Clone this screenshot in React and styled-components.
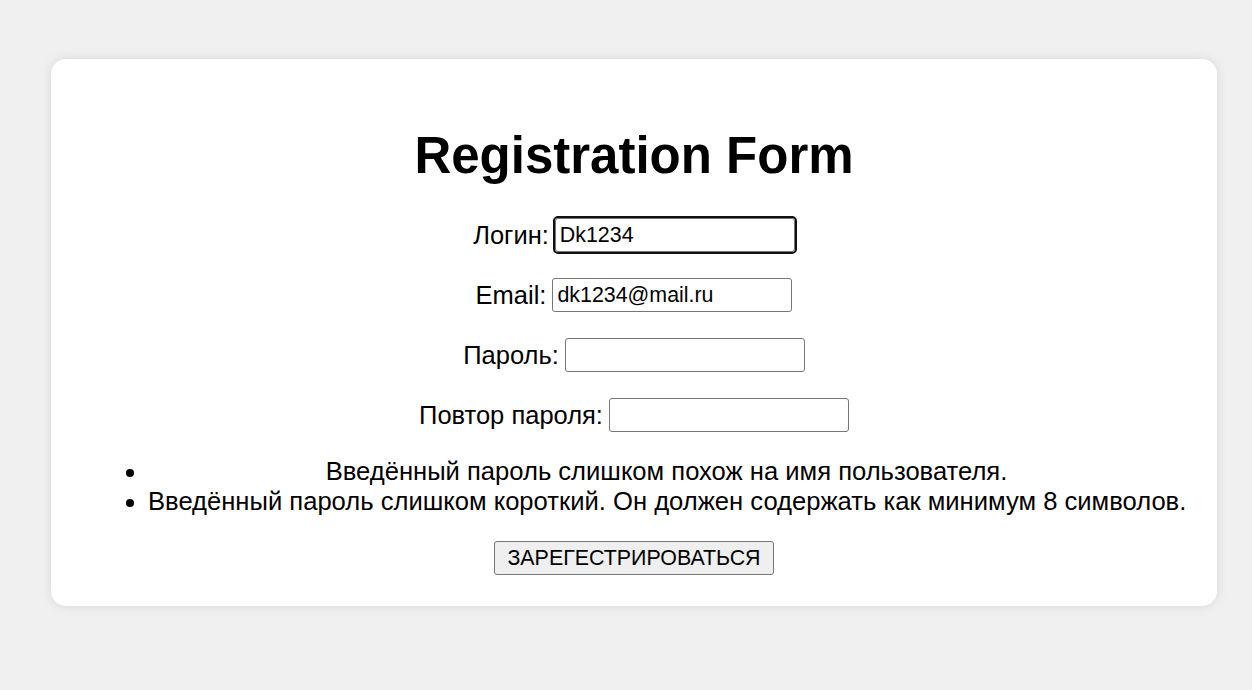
import React from "react";
import styled, { createGlobalStyle } from "styled-components";

const GlobalStyle = createGlobalStyle`
  html, body {
    margin: 0;
    padding: 0;
    background: #f0f0f0;
    font-family: "Liberation Sans", Arial, Helvetica, sans-serif;
    color: #000;
  }
`;

const Page = styled.div`
  min-height: 690px;
  padding: 59px 35px 0 51px;
  box-sizing: border-box;
`;

const Card = styled.div`
  background: #fff;
  border-radius: 15px;
  box-shadow: 0 0 12px rgba(0, 0, 0, 0.1);
  padding: 33px 32px 31px;
  display: flex;
  flex-direction: column;
  align-items: center;
`;

const Title = styled.h1`
  font-size: 51px;
  font-weight: 700;
  margin: 34px 0 33px;
  line-height: 59px;
`;

const Fields = styled.div`
  display: flex;
  flex-direction: column;
  align-items: center;
  gap: 26px;
`;

const Row = styled.label`
  display: flex;
  align-items: center;
  gap: 6px;
  height: 34px;
  font-size: 25.5px;
`;

const Input = styled.input`
  width: 240px;
  height: 34px;
  box-sizing: border-box;
  padding: 1px 4px;
  font-family: "Liberation Sans", Arial, sans-serif;
  font-size: 21.4px;
  color: #000;
  border: 1px solid #767676;
  border-radius: 3px;
  background: #fff;
  outline: ${(p) => (p.$focused ? "2px solid #101010" : "none")};
  outline-offset: 0;
`;

const Errors = styled.ul`
  align-self: stretch;
  margin: 24px 0 0 25px;
  padding-left: 40px;
  list-style: disc;
`;

const ErrorItem = styled.li`
  font-size: 25.6px;
  line-height: 30px;
  text-align: center;
  white-space: nowrap;
`;

const Submit = styled.button`
  margin-top: 25px;
  height: 34px;
  padding: 0 12px;
  font-family: "Liberation Sans", Arial, sans-serif;
  font-size: 21.4px;
  color: #000;
  background: #efefef;
  border: 1px solid #767676;
  border-radius: 3px;
`;

const fields = [
  { label: "Логин:", value: "Dk1234", focused: true },
  { label: "Email:", value: "dk1234@mail.ru" },
  { label: "Пароль:", value: "", type: "password" },
  { label: "Повтор пароля:", value: "", type: "password" },
];

const errors = [
  "Введённый пароль слишком похож на имя пользователя.",
  "Введённый пароль слишком короткий. Он должен содержать как минимум 8 символов.",
];

export default function App() {
  return (
    <>
      <GlobalStyle />
      <Page>
        <Card>
          <Title>Registration Form</Title>
          <Fields>
            {fields.map((f) => (
              <Row key={f.label}>
                {f.label}
                <Input
                  type={f.type || "text"}
                  defaultValue={f.value}
                  $focused={f.focused}
                />
              </Row>
            ))}
          </Fields>
          <Errors>
            {errors.map((e) => (
              <ErrorItem key={e}>{e}</ErrorItem>
            ))}
          </Errors>
          <Submit>ЗАРЕГЕСТРИРОВАТЬСЯ</Submit>
        </Card>
      </Page>
    </>
  );
}
